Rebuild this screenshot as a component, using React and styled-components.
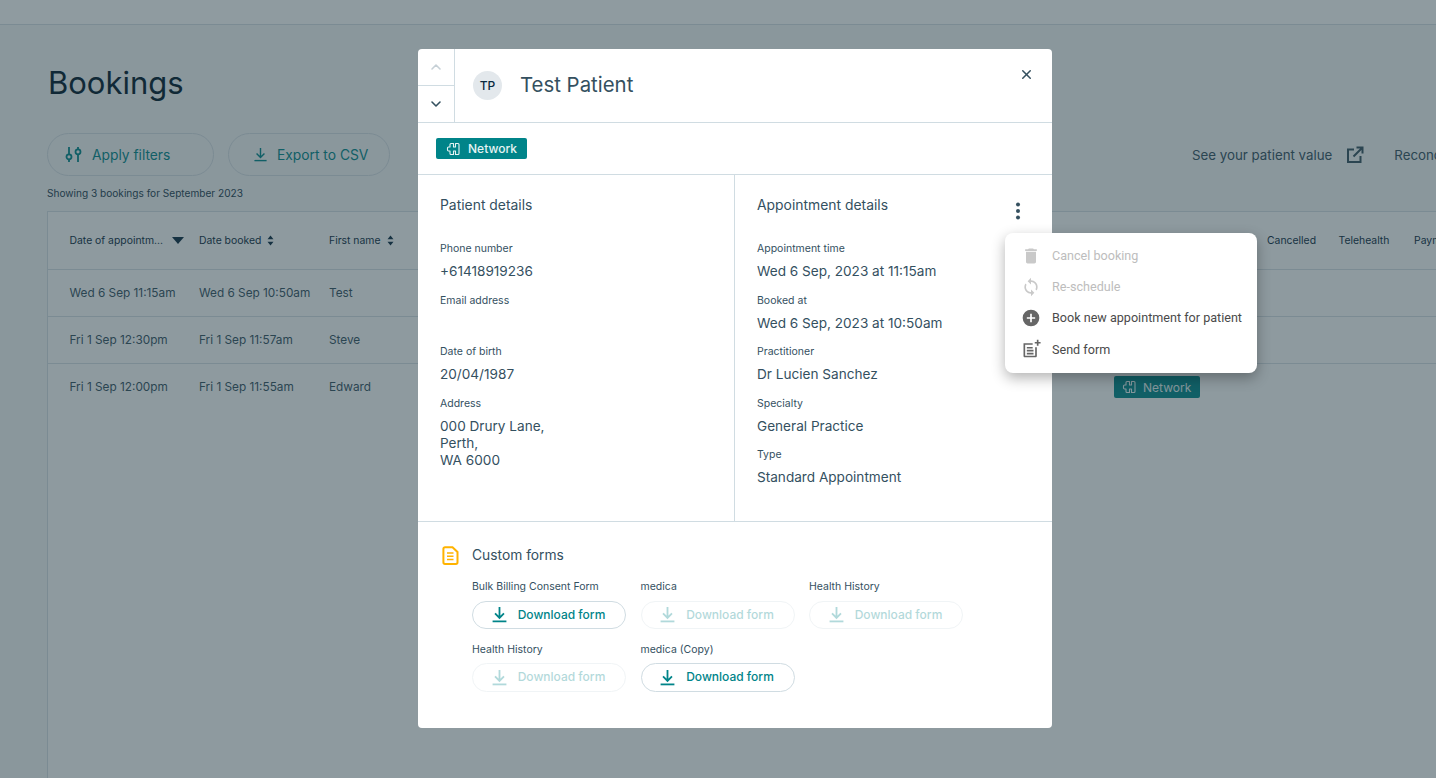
import React from 'react';
import styled, { createGlobalStyle } from 'styled-components';
import { ChevronUp, ChevronDown, X } from 'lucide-react';

const Global = createGlobalStyle`
  html, body { margin: 0; padding: 0; height: 100%; overflow: hidden; }
  body { font-family: "Inter", "Liberation Sans", sans-serif; background: #fff; }
  #root { height: 100%; }
`;

const Page = styled.div`
  position: relative;
  width: 1436px;
  height: 778px;
  overflow: hidden;
  background: #f3f4f5;
  color: #0f2c3f;
`;

const TopBar = styled.div`
  height: 24px;
  background: #fcfdfd;
  border-bottom: 1px solid #d5dde2;
`;

const Content = styled.div`
  padding: 38px 0 0 48px;
`;

const Title = styled.h1`
  margin: 0;
  font-size: 31px;
  font-weight: 400;
  line-height: 40px;
  color: #00182b;
`;

const Toolbar = styled.div`
  display: flex;
  align-items: center;
  margin: 30px 0 0 -1px;
  white-space: nowrap;
`;

const PillButton = styled.div`
  display: flex;
  flex: none;
  align-items: center;
  gap: ${(p) => p.$gap}px;
  box-sizing: border-box;
  width: ${(p) => p.$width}px;
  height: 43px;
  margin-right: 14px;
  padding-left: ${(p) => p.$pad}px;
  border: 1px solid #d5dde2;
  border-radius: 22px;
  font-size: 13.8px;
  color: #008489;
`;

const PlainLink = styled.div`
  display: flex;
  flex: none;
  align-items: center;
  gap: 14px;
  font-size: 13.3px;
  color: #34505f;
  margin-left: ${(p) => p.$left}px;
`;

const Showing = styled.div`
  margin: 10px 0 0 -1px;
  font-size: 10.1px;
  line-height: 14px;
  color: #24404f;
`;

const Table = styled.div`
  margin: 11px 0 0 -1px;
  background: #fbfbfb;
  border: 1px solid #d5dde2;
  width: 1500px;
  height: 700px;
`;

const Row = styled.div`
  display: flex;
  align-items: center;
  box-sizing: border-box;
  height: ${(p) => (p.$head ? 58 : 47)}px;
  padding: ${(p) => (p.$head ? '0 0 0 21.5px' : '0 0 1px 21.5px')};
  border-bottom: 1px solid #d5dde2;
  font-size: ${(p) => (p.$head ? 10.4 : 11.8)}px;
  color: ${(p) => (p.$head ? '#0b2a40' : '#34505f')};
  white-space: nowrap;
  &:last-child { border-bottom: 0; }
`;

const Cell = styled.div`
  display: flex;
  align-items: center;
  gap: 6px;
  flex: none;
  width: ${(p) => p.$width}px;
`;

const Caret = styled.span`
  width: 0;
  height: 0;
  margin-left: 3px;
  border-left: 6px solid transparent;
  border-right: 6px solid transparent;
  border-top: 7px solid #0b2a40;
`;

const Overlay = styled.div`
  position: absolute;
  inset: 0;
  background: rgba(34, 58, 68, 0.5);
`;

const Modal = styled.div`
  position: absolute;
  left: 418px;
  top: 49px;
  width: 634px;
  height: 679px;
  background: #fff;
  border-radius: 4px;
  overflow: hidden;
  color: #34505f;
`;

const Header = styled.div`
  display: flex;
  align-items: center;
  height: 73px;
  border-bottom: 1px solid #d0dce2;
`;

const Steppers = styled.div`
  display: flex;
  flex-direction: column;
  flex: none;
  width: 36px;
  height: 100%;
  border-right: 1px solid #d0dce2;
`;

const Stepper = styled.div`
  display: flex;
  align-items: center;
  justify-content: center;
  flex: 1;
  color: ${(p) => (p.$disabled ? '#c6d0d6' : '#34505f')};
  & + & { border-top: 1px solid #d0dce2; }
`;

const Avatar = styled.div`
  display: flex;
  align-items: center;
  justify-content: center;
  width: 29px;
  height: 29px;
  margin-left: 18px;
  border-radius: 50%;
  background: #e3e8ec;
  font-size: 12px;
  font-weight: 500;
  color: #0b2a40;
`;

const PatientName = styled.div`
  flex: 1;
  margin: 0 0 2px 18px;
  font-size: 20.4px;
  color: #34505f;
`;

const Close = styled.div`
  align-self: flex-start;
  margin: 18px 18px 0 0;
  color: #34505f;
  line-height: 0;
`;

const TagRow = styled.div`
  display: flex;
  align-items: center;
  height: 51px;
  padding-left: 18px;
  border-bottom: 1px solid #d0dce2;
`;

const Tag = styled.div`
  display: inline-flex;
  align-items: center;
  gap: ${(p) => (p.$compact ? 6 : 7)}px;
  box-sizing: border-box;
  height: ${(p) => (p.$compact ? 22 : 21)}px;
  padding: 0 ${(p) => (p.$compact ? 9 : 10)}px 0 ${(p) => (p.$compact ? 8 : 10)}px;
  border-radius: 2px;
  background: #008489;
  color: #e6f4f4;
  font-size: 12px;
  font-weight: ${(p) => (p.$compact ? 400 : 500)};
`;

const Details = styled.div`
  display: grid;
  grid-template-columns: 316px 1fr;
  height: 346px;
  border-bottom: 1px solid #d0dce2;
`;

const DetailCol = styled.div`
  position: relative;
  padding: 21px 22px 0;
  & + & { border-left: 1px solid #d0dce2; }
`;

const SectionTitle = styled.div`
  font-size: 13.9px;
  line-height: 18px;
  color: #34505f;
  margin-bottom: 28px;
`;

const Field = styled.div`
  margin-bottom: 13.5px;
`;

const FieldLabel = styled.div`
  font-size: 10.5px;
  line-height: 14px;
  color: #34505f;
`;

const FieldValue = styled.div`
  min-height: 17px;
  margin-top: 7px;
  font-size: 13.6px;
  line-height: 17px;
  color: #34505f;
`;

const Kebab = styled.div`
  position: absolute;
  top: 24px;
  right: 22px;
  line-height: 0;
  color: #34505f;
`;

const Forms = styled.div`
  padding: 22px 0 0 24px;
`;

const FormsTitle = styled.div`
  display: flex;
  align-items: center;
  gap: 13px;
  font-size: 13.8px;
  line-height: 22px;
  color: #34505f;
`;

const FormsGrid = styled.div`
  display: grid;
  grid-template-columns: repeat(3, 154px);
  column-gap: 14.5px;
  row-gap: 13.5px;
  margin: 14px 0 0 30px;
`;

const FormItem = styled.div`
  font-size: 10.5px;
  line-height: 14px;
  color: #34505f;
`;

const DownloadButton = styled.div`
  display: flex;
  align-items: center;
  justify-content: center;
  gap: 10px;
  box-sizing: border-box;
  height: 28.5px;
  margin-top: 6.5px;
  padding-right: 2px;
  border: 1px solid #d0dce2;
  border-radius: 15px;
  font-size: 12px;
  font-weight: 500;
  color: #008489;
  opacity: ${(p) => (p.$disabled ? 0.3 : 1)};
`;

const Menu = styled.div`
  position: absolute;
  left: 1005px;
  top: 233px;
  box-sizing: border-box;
  width: 252px;
  height: 140px;
  padding: 7px 0;
  background: #fff;
  border-radius: 8px;
  box-shadow: 0 5px 14px rgba(0, 0, 0, 0.3);
  font-family: "Roboto", "Liberation Sans", sans-serif;
`;

const MenuItem = styled.div`
  display: flex;
  align-items: center;
  height: 31.2px;
  padding-left: 16px;
  gap: 11px;
  font-size: 12.6px;
  white-space: nowrap;
  color: ${(p) => (p.$disabled ? '#bdbdbd' : '#4a4a4a')};
`;

const MenuIcon = styled.svg`
  flex: none;
  width: 20px;
  height: 20px;
  fill: currentColor;
  color: ${(p) => (p.$disabled ? '#c9c9c9' : '#666')};
`;

// hand drawn - the network tag mark
const NetworkIcon = () => (
  <svg width="15" height="14" viewBox="0 0 14 14" fill="none" stroke="currentColor" strokeWidth="1.1" strokeLinejoin="round">
    <path d="M4.500 1.500h2.500v3.500h2v-3.500h2.500a1 1 0 0 1 1 1v9a1 1 0 0 1-1 1h-2.500v-3.500h-2v3.500h-2.500a1 1 0 0 1-1-1v-2.500h-1.500a1 1 0 0 1-1-1v-2a1 1 0 0 1 1-1h1.500v-2.500a1 1 0 0 1 1-1z" />
  </svg>
);

const FilterIcon = () => (
  <svg width="17" height="17" viewBox="0 0 17 17" fill="none" stroke="currentColor" strokeWidth="1.800">
    <path d="M4 1v7M4 13.500V16M13 1v2M13 8.500V16" />
    <circle cx="4" cy="10.800" r="2.500" />
    <circle cx="13" cy="5.800" r="2.500" />
  </svg>
);

const ArrowDownBar = ({ size, weight = 1.5 }) => (
  <svg width={size} height={size} viewBox="0 0 16 16" fill="none" stroke="currentColor" strokeWidth={weight}>
    <path d="M8 1v10M3.800 7l4.200 4.200L12.200 7" />
    <path d="M1.500 14.500h13" />
  </svg>
);

const OpenIcon = () => (
  <svg width="18" height="18" viewBox="0 0 18 18" fill="none" stroke="currentColor" strokeWidth="2">
    <path d="M8 3.500H2v12.500h12.500V10" />
    <path d="M10.500 1.500h6v6M16.500 1.500L7.500 10.500" />
  </svg>
);

const SortIcon = () => (
  <svg width="7" height="11" viewBox="0 0 7 11" fill="currentColor">
    <path d="M3.500 0.500L6.500 4.300H0.500zM3.500 10.500L0.500 6.700H6.500z" />
  </svg>
);

const Dots = () => (
  <svg width="24" height="24" viewBox="0 0 24 24" fill="currentColor">
    <circle cx="12" cy="5.500" r="2" />
    <circle cx="12" cy="12" r="2" />
    <circle cx="12" cy="18.500" r="2" />
  </svg>
);

const FormDocIcon = () => (
  <svg width="17" height="19" viewBox="0 0 17 19" fill="none" stroke="#ffb300" strokeWidth="2">
    <path d="M3 1.200h7.500l5 4.800v10.300a1.600 1.600 0 0 1-1.600 1.600H3a1.600 1.600 0 0 1-1.600-1.600V2.800A1.600 1.600 0 0 1 3 1.200z" />
    <path d="M5 7h6.500M5 10.300h6.500M5 13.600h6.500" strokeWidth="1.500" />
  </svg>
);

const forms = [
  { name: 'Bulk Billing Consent Form' },
  { name: 'medica', disabled: true },
  { name: 'Health History', disabled: true },
  { name: 'Health History', disabled: true },
  { name: 'medica (Copy)' },
];

const patientFields = [
  ['Phone number', '+61418919236'],
  ['Email address', ''],
  ['Date of birth', '20/04/1987'],
  ['Address', <>000 Drury Lane,<br />Perth,<br />WA 6000</>],
];

const appointmentFields = [
  ['Appointment time', 'Wed 6 Sep, 2023 at 11:15am'],
  ['Booked at', 'Wed 6 Sep, 2023 at 10:50am'],
  ['Practitioner', 'Dr Lucien Sanchez'],
  ['Specialty', 'General Practice'],
  ['Type', 'Standard Appointment'],
];

const bookings = [
  ['Wed 6 Sep 11:15am', 'Wed 6 Sep 10:50am', 'Test'],
  ['Fri 1 Sep 12:30pm', 'Fri 1 Sep 11:57am', 'Steve'],
  ['Fri 1 Sep 12:00pm', 'Fri 1 Sep 11:55am', 'Edward', true],
];

export default function App() {
  return (
    <Page>
      <Global />
      <TopBar />
      <Content>
        <Title>Bookings</Title>
        <Toolbar>
          <PillButton $width={167} $pad={17} $gap={10}><FilterIcon />Apply filters</PillButton>
          <PillButton $width={162} $pad={24} $gap={9}><ArrowDownBar size={15} />Export to CSV</PillButton>
          <PlainLink $left={788}>See your patient value <OpenIcon /></PlainLink>
          <PlainLink $left={30}>Reconcile</PlainLink>
        </Toolbar>
        <Showing>Showing 3 bookings for September 2023</Showing>
        <Table>
          <Row $head>
            <Cell $width={129.5}>Date of appointm...<Caret /></Cell>
            <Cell $width={130}>Date booked <SortIcon /></Cell>
            <Cell $width={785}>First name <SortIcon /></Cell>
            <Cell $width={153} />
            <Cell $width={71.5}>Cancelled</Cell>
            <Cell $width={75.5}>Telehealth</Cell>
            <Cell $width={80}>Payment</Cell>
          </Row>
          {bookings.map(([when, booked, name, network]) => (
            <Row key={when}>
              <Cell $width={129.5}>{when}</Cell>
              <Cell $width={130}>{booked}</Cell>
              <Cell $width={785}>{name}</Cell>
              {network && <Tag $compact><NetworkIcon />Network</Tag>}
            </Row>
          ))}
        </Table>
      </Content>
      <Overlay />
      <Modal>
        <Header>
          <Steppers>
            <Stepper $disabled><ChevronUp size={16} strokeWidth={2.4} /></Stepper>
            <Stepper><ChevronDown size={16} strokeWidth={2.4} /></Stepper>
          </Steppers>
          <Avatar>TP</Avatar>
          <PatientName>Test Patient</PatientName>
          <Close><X size={15} strokeWidth={2.4} /></Close>
        </Header>
        <TagRow>
          <Tag><NetworkIcon />Network</Tag>
        </TagRow>
        <Details>
          <DetailCol>
            <SectionTitle>Patient details</SectionTitle>
            {patientFields.map(([label, value]) => (
              <Field key={label}>
                <FieldLabel>{label}</FieldLabel>
                <FieldValue>{value}</FieldValue>
              </Field>
            ))}
          </DetailCol>
          <DetailCol>
            <SectionTitle>Appointment details</SectionTitle>
            <Kebab><Dots /></Kebab>
            {appointmentFields.map(([label, value]) => (
              <Field key={label}>
                <FieldLabel>{label}</FieldLabel>
                <FieldValue>{value}</FieldValue>
              </Field>
            ))}
          </DetailCol>
        </Details>
        <Forms>
          <FormsTitle><FormDocIcon />Custom forms</FormsTitle>
          <FormsGrid>
            {forms.map((form, i) => (
              <FormItem key={i}>
                {form.name}
                <DownloadButton $disabled={form.disabled}><ArrowDownBar size={17} weight={1.7} />Download form</DownloadButton>
              </FormItem>
            ))}
          </FormsGrid>
        </Forms>
      </Modal>
      <Menu>
        <MenuItem $disabled>
          <MenuIcon $disabled viewBox="0 0 24 24"><path d="M6 19c0 1.100.9 2 2 2h8c1.100 0 2-.9 2-2V7H6v12zM19 4h-3.500l-1-1h-5l-1 1H5v2h14V4z" /></MenuIcon>
          Cancel booking
        </MenuItem>
        <MenuItem $disabled>
          <MenuIcon $disabled viewBox="0 0 24 24"><path d="M12 4V1L8 5l4 4V6c3.300 0 6 2.700 6 6 0 1-.25 2-.7 2.800l1.460 1.460C19.540 15 20 13.600 20 12c0-4.400-3.600-8-8-8zm0 14c-3.300 0-6-2.700-6-6 0-1 .25-2 .7-2.800L5.240 7.740C4.460 9 4 10.400 4 12c0 4.400 3.600 8 8 8v3l4-4-4-4v3z" /></MenuIcon>
          Re-schedule
        </MenuItem>
        <MenuItem>
          <MenuIcon viewBox="0 0 24 24"><path d="M12 2a10 10 0 1 0 0 20 10 10 0 0 0 0-20zm5 11h-4v4h-2v-4H7v-2h4V7h2v4h4v2z" /></MenuIcon>
          Book new appointment for patient
        </MenuItem>
        <MenuItem>
          <MenuIcon viewBox="0 0 24 24"><path d="M19 1v2.500h-2.500v2H19V8h2V5.500h2.500v-2H21V1h-2zM3 5v15.500C3 21.300 3.700 22 4.500 22h13c.8 0 1.500-.7 1.500-1.500V10h-2v10H5V7h9V5H3zm4 4.500v2h7v-2H7zm0 3.500v2h8v-2H7zm0 3.500v2h8v-2H7z" /></MenuIcon>
          Send form
        </MenuItem>
      </Menu>
    </Page>
  );
}
